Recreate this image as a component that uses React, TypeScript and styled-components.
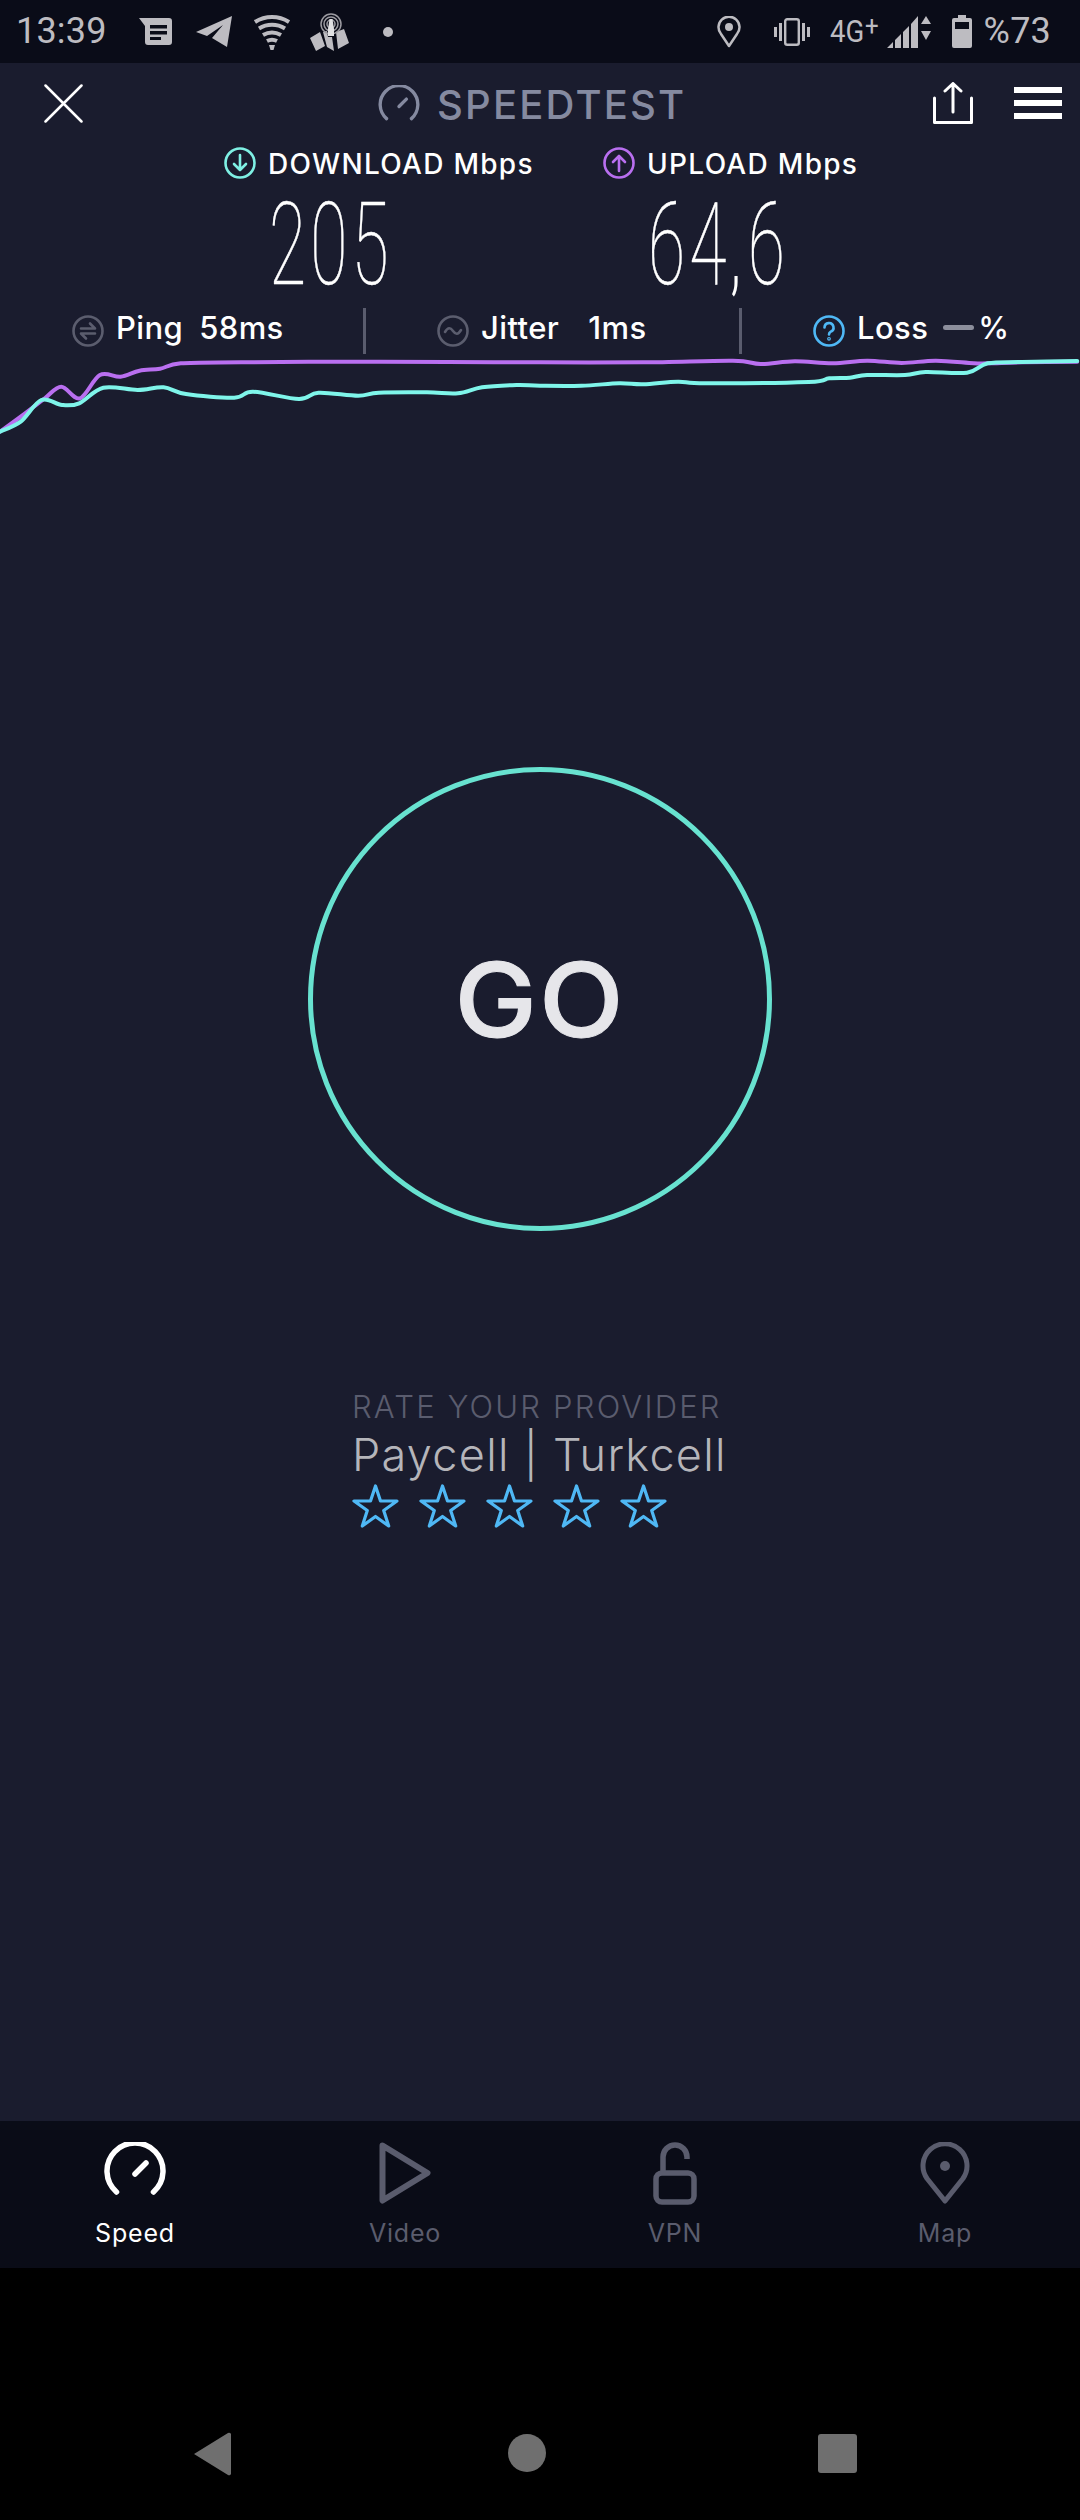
import React from "react";
import styled, { createGlobalStyle } from "styled-components";

const UI = `Inter, "Noto Sans", sans-serif`;

const Global = createGlobalStyle`
  html, body { margin: 0; padding: 0; background: #000; }
  #root { width: 1080px; height: 2520px; }
  * { box-sizing: border-box; }
`;

const Screen = styled.div`
  width: 1080px;
  height: 2520px;
  display: flex;
  flex-direction: column;
  background: #1a1c2e;
  font-family: ${UI};
  overflow: hidden;
`;

const StatusBar = styled.div`
  height: 63px;
  flex: none;
  background: #0a0c18;
  display: flex;
  align-items: center;
  justify-content: space-between;
  padding: 0 29px 0 16px;
  color: #bdbcc1;
  font-family: Roboto, sans-serif;
`;
const StatusGroup = styled.div`
  display: flex;
  align-items: center;
`;
const StatusText = styled.span`
  font-size: 36px;
  line-height: 63px;
  letter-spacing: 0.2px;
`;
const StatusSlot = styled.span<{ $left: number }>`
  display: flex;
  margin-left: ${(p) => p.$left}px;
`;
const Network = styled.span`
  display: inline-block;
  width: 50px;
  margin-left: 20px;
  font-size: 32px;
  line-height: 63px;
  white-space: nowrap;
  transform: scaleX(0.86);
  transform-origin: left center;
`;
const NetworkPlus = styled.span`
  font-size: 28px;
  position: relative;
  top: -7px;
  margin-left: 1px;
`;

const Header = styled.div`
  height: 80px;
  flex: none;
  display: flex;
  align-items: center;
  padding: 0 18px 0 44px;
`;
const Brand = styled.div`
  display: flex;
  align-items: center;
  gap: 17px;
  margin-left: 295px;
  color: #858aa0;
  font-size: 40px;
  font-weight: 500;
  letter-spacing: 2.2px;
`;
const BrandName = styled.span`
  margin-top: 2px;
`;
const HeaderActions = styled.div`
  margin-left: auto;
  display: flex;
  align-items: center;
  gap: 41px;
`;

const MetricsRow = styled.div`
  display: flex;
  flex: none;
  padding-left: 224px;
`;
const Metric = styled.div<{ $width: number }>`
  width: ${(p) => p.$width}px;
`;
const MetricLabel = styled.div`
  display: flex;
  align-items: center;
  gap: 12px;
  height: 40px;
  color: #fff;
  font-size: 28px;
  font-weight: 500;
  letter-spacing: 1.3px;
  white-space: nowrap;
`;
const MetricText = styled.span`
  margin-top: 2px;
`;
const MetricValue = styled.div`
  margin: 3px 0 0 45px;
  height: 122px;
  color: #fff;
  font-family: Roboto, sans-serif;
  font-weight: 100;
  font-size: 115px;
  line-height: 118px;
  letter-spacing: 7px;
  -webkit-text-stroke: 0.5px #fff;
  white-space: nowrap;
  transform: scaleX(0.59);
  transform-origin: left top;
`;
const MetricComma = styled.span`
  font-size: 90px;
  font-weight: 300;
  -webkit-text-stroke: 0;
  letter-spacing: 12px;
`;

const StatsRow = styled.div`
  display: grid;
  grid-template-columns: 363px 376px 1fr;
  height: 46px;
  flex: none;
`;
const StatCell = styled.div<{ $divider?: boolean }>`
  display: flex;
  align-items: center;
  padding-left: ${(p) => (p.$divider ? 71 : 72)}px;
  border-left: ${(p) => (p.$divider ? "3px solid #5a5c6e" : "none")};
  color: #fff;
  font-size: 31px;
  font-weight: 500;
  letter-spacing: 0.4px;
  white-space: nowrap;
`;
const StatName = styled.span`
  margin: 0 0 7px 12px;
`;
const StatValue = styled.span<{ $left: number }>`
  margin: 0 0 7px ${(p) => p.$left}px;
`;
const LossDash = styled.span`
  width: 31px;
  height: 5px;
  border-radius: 3px;
  background: #8c8e9c;
  margin: 0 4px 7px 15px;
`;
const LossUnit = styled.span`
  margin-bottom: 7px;
`;

const Chart = styled.svg`
  display: block;
  flex: none;
  width: 1080px;
  height: 90px;
`;

const GoButton = styled.button`
  align-self: center;
  flex: none;
  width: 464px;
  height: 464px;
  margin-top: 323px;
  border-radius: 50%;
  border: 5px solid #68e2d0;
  background: transparent;
  color: #e6e6ea;
  font-family: ${UI};
  padding: 0;
`;
const GoLabel = styled.span`
  display: inline-block;
  font-size: 103px;
  font-weight: 500;
  letter-spacing: 2px;
  transform: scaleX(1.07);
  -webkit-text-stroke: 1px #e6e6ea;
`;

const Rate = styled.div`
  flex: none;
  margin: 157px 0 0 352px;
`;
const RateTitle = styled.div`
  color: #5a5c6e;
  font-size: 31px;
  font-weight: 300;
  line-height: 38px;
  letter-spacing: 2.2px;
`;
const RateProvider = styled.div`
  color: #b5b5ba;
  font-size: 45px;
  font-weight: 300;
  line-height: 58px;
  letter-spacing: 1.3px;
`;
const Stars = styled.div`
  display: flex;
  gap: 20px;
`;

const Spacer = styled.div`
  flex: 1;
`;

const TabBar = styled.div`
  flex: none;
  height: 147px;
  background: #0a0c17;
  display: grid;
  grid-template-columns: repeat(4, 1fr);
`;
const Tab = styled.div<{ $active?: boolean }>`
  display: flex;
  flex-direction: column;
  align-items: center;
  color: ${(p) => (p.$active ? "#fff" : "#5a5c6d")};
  font-size: 25px;
  font-weight: 400;
  letter-spacing: 0.8px;
`;
const TabIcon = styled.div`
  height: 84px;
  padding-top: 21px;
  display: flex;
  justify-content: center;
`;
const TabLabel = styled.div`
  line-height: 40px;
  margin-top: 8px;
`;

const NavBar = styled.div`
  flex: none;
  height: 252px;
  background: #000;
  display: flex;
  align-items: flex-start;
  padding: 164px 0 0 193px;
`;
const NavBack = styled.svg`
  width: 38px;
  height: 44px;
`;
const NavHome = styled.span`
  width: 38px;
  height: 38px;
  margin: 2px 0 0 277px;
  border-radius: 50%;
  background: #6f6f6f;
`;
const NavRecent = styled.span`
  width: 39px;
  height: 39px;
  margin: 2px 0 0 272px;
  border-radius: 3px;
  background: #6f6f6f;
`;

const sx = 2.904;
const L = (pts: number[][]) => pts.map(([x, y]) => [x / sx, y / 3 + 130 - 354]);
const R = (pts: number[][]) => pts.map(([x, y]) => [540 + x / sx, y / 3 + 130 - 354]);

const smooth = (pts: number[][]) => {
  let d = `M${pts[0][0].toFixed(1)} ${pts[0][1].toFixed(1)}`;
  for (let i = 0; i < pts.length - 1; i++) {
    const p0 = pts[Math.max(i - 1, 0)];
    const p1 = pts[i];
    const p2 = pts[i + 1];
    const p3 = pts[Math.min(i + 2, pts.length - 1)];
    const c1x = p1[0] + (p2[0] - p0[0]) / 6;
    const c1y = p1[1] + (p2[1] - p0[1]) / 6;
    const c2x = p2[0] - (p3[0] - p1[0]) / 6;
    const c2y = p2[1] - (p3[1] - p1[1]) / 6;
    d += ` C${c1x.toFixed(1)} ${c1y.toFixed(1)} ${c2x.toFixed(1)} ${c2y.toFixed(1)} ${p2[0].toFixed(1)} ${p2[1].toFixed(1)}`;
  }
  return d;
};

const purple = smooth([
  ...L([[0, 905], [60, 860], [130, 805], [178, 770], [232, 805], [290, 735], [350, 740], [405, 722], [465, 716], [525, 700], [700, 697], [1000, 695], [1300, 696]]),
  ...R([[0, 697], [300, 697], [560, 692], [640, 702], [740, 694], [850, 700], [950, 692], [1050, 699], [1150, 692], [1260, 700], [1300, 700], [1400, 697], [1560, 695]]),
]);
const cyan = smooth([
  ...L([[0, 905], [60, 875], [120, 810], [180, 825], [230, 820], [300, 773], [400, 780], [475, 772], [540, 792], [680, 803], [735, 785], [868, 807], [925, 788], [1040, 797], [1100, 788], [1240, 787], [1330, 790], [1400, 772], [1500, 765]]),
  ...R([[0, 767], [120, 767], [230, 760], [300, 763], [400, 755], [480, 760], [780, 756], [840, 745], [900, 743], [950, 735], [1060, 735], [1120, 726], [1240, 728], [1300, 700], [1400, 696], [1560, 693]]),
]);

const Gauge = ({ w, h, color, sw }: { w: number; h: number; color: string; sw: number }) => (
  <svg width={w} height={h} viewBox="0 0 62 55" fill="none" stroke={color} strokeWidth={sw} strokeLinecap="round">
    <path d="M12.5 50A28 28 0 1 1 49.500 50" />
    <path d="M31 32L42 21" />
  </svg>
);

const Ring = ({ color, children }: { color: string; children: React.ReactNode }) => (
  <svg width="32" height="32" viewBox="0 0 32 32" fill="none" stroke={color} strokeWidth="2.6" strokeLinecap="round" strokeLinejoin="round">
    <circle cx="16" cy="16" r="14.5" />
    {children}
  </svg>
);

const Star = () => (
  <svg width="47" height="44" viewBox="0 0 47 44" fill="none" stroke="#4fb8f5" strokeWidth="3.2" strokeLinejoin="round">
    <path d="M23.500 2L28.500 17H45L31.700 26.500L36.700 42L23.500 32.500L10.300 42L15.300 26.500L2 17H18.500Z" />
  </svg>
);

export default function App() {
  return (
    <Screen>
      <Global />
      <StatusBar>
        <StatusGroup>
          <StatusText>13:39</StatusText>
          <StatusSlot $left={32}>
            <svg width="33" height="27" viewBox="0 0 33 27">
              <path fill="#bdbcc1" d="M0 0H30a3 3 0 0 1 3 3V24a3 3 0 0 1-3 3H9a3 3 0 0 1-3-3V8Z" />
              <path fill="#0a0c18" d="M11 7H28V10.500H11ZM11 13H28V16.500H11ZM11 19H22V22H11Z" />
            </svg>
          </StatusSlot>
          <StatusSlot $left={24}>
            <svg width="36" height="32" viewBox="0 0 36 32">
              <path fill="#bdbcc1" d="M0 16L36 0L31 31L16 22L27 9L11 20Z" />
            </svg>
          </StatusSlot>
          <StatusSlot $left={22}>
            <svg width="36" height="36" viewBox="0 0 36 36" fill="none" stroke="#bdbcc1" strokeWidth="4">
              <path d="M1 8A32 32 0 0 1 35 8" />
              <path d="M5 14.500A25 25 0 0 1 31 14.500" />
              <path d="M9 21A18 18 0 0 1 27 21" />
              <path d="M13 27A11 11 0 0 1 23 27" />
              <path fill="#bdbcc1" stroke="none" d="M15 31H21L19.500 36H16.500Z" />
            </svg>
          </StatusSlot>
          <StatusSlot $left={20}>
            <svg width="39" height="38" viewBox="0 0 39 38">
              <path fill="#bdbcc1" d="M0 25L10 19L15 33L6 38ZM13 19L17 18L18 24H22L24 38L17 34ZM26 19L34 16L39 30L28 36Z" />
              <g fill="none" stroke="#9c9ba1" strokeWidth="1.500">
                <circle cx="21" cy="11" r="10" />
                <circle cx="21" cy="11" r="7" />
                <circle cx="21" cy="11" r="4" />
              </g>
              <path fill="#e0e0e2" d="M19.500 6H22.500L24 16V23H18V16Z" />
            </svg>
          </StatusSlot>
          <StatusSlot $left={34}>
            <svg width="10" height="10" viewBox="0 0 10 10">
              <circle cx="5" cy="5" r="5" fill="#bdbcc1" />
            </svg>
          </StatusSlot>
        </StatusGroup>
        <StatusGroup>
          <svg width="24" height="32" viewBox="0 0 24 32" fill="none" stroke="#bdbcc1" strokeWidth="2.500">
            <path d="M12 30L4 18A10.500 10.500 0 1 1 20 18Z" strokeLinejoin="round" />
            <circle cx="12" cy="11" r="4" fill="#bdbcc1" stroke="none" />
          </svg>
          <StatusSlot $left={33}>
            <svg width="36" height="28" viewBox="0 0 36 28" fill="#bdbcc1">
              <path d="M0 9H3V19H0ZM5 5H8V23H5ZM28 5H31V23H28ZM33 9H36V19H33Z" />
              <rect x="11.200" y="1.200" width="13.600" height="25.600" rx="2" fill="none" stroke="#bdbcc1" strokeWidth="2.400" />
            </svg>
          </StatusSlot>
          <Network>
            4G<NetworkPlus>+</NetworkPlus>
          </Network>
          <StatusSlot $left={7}>
            <svg width="44" height="33" viewBox="0 0 44 33" fill="#bdbcc1">
              <path d="M0 33L6 27V33ZM8 33V25L14 19V33ZM16 33V17L22 11V33ZM24 33V9L31 1V33Z" />
              <path d="M39 1L44 9H34ZM39 25L34 16H44Z" />
            </svg>
          </StatusSlot>
          <StatusSlot $left={21}>
            <svg width="20" height="33" viewBox="0 0 20 33">
              <path fill="#bdbcc1" d="M6 0H14V3H18a2 2 0 0 1 2 2V31a2 2 0 0 1-2 2H2a2 2 0 0 1-2-2V5a2 2 0 0 1 2-2H6Z" />
              <path fill="#0a0c18" d="M3 7H17V14H3Z" />
            </svg>
          </StatusSlot>
          <StatusSlot $left={12}>
            <StatusText>%73</StatusText>
          </StatusSlot>
        </StatusGroup>
      </StatusBar>

      <Header>
        <svg width="39" height="39" viewBox="0 0 39 39" stroke="#fff" strokeWidth="2.500" strokeLinecap="round">
          <path d="M1.500 1.500L37.500 37.500M37.500 1.500L1.500 37.500" />
        </svg>
        <Brand>
          <Gauge w={42} h={37} color="#858aa0" sw={5} />
          <BrandName>SPEEDTEST</BrandName>
        </Brand>
        <HeaderActions>
          <svg width="40" height="42" viewBox="0 0 40 42" fill="none" stroke="#fff" strokeWidth="3" strokeLinecap="round" strokeLinejoin="round">
            <path d="M1.500 16V40.500H38.500V16" />
            <path d="M20 30V2M12 9L20 1.500L28 9" />
          </svg>
          <svg width="48" height="32" viewBox="0 0 48 32" fill="#fff">
            <path d="M0 0H48V6H0ZM0 13H48V19H0ZM0 26H48V32H0Z" />
          </svg>
        </HeaderActions>
      </Header>

      <MetricsRow>
        <Metric $width={379}>
          <MetricLabel>
            <Ring color="#7ff0e4">
              <path d="M16 8V23M10 17L16 23L22 17" />
            </Ring>
            <MetricText>DOWNLOAD Mbps</MetricText>
          </MetricLabel>
          <MetricValue>205</MetricValue>
        </Metric>
        <Metric $width={300}>
          <MetricLabel>
            <Ring color="#b96ff0">
              <path d="M16 24V9M10 15L16 9L22 15" />
            </Ring>
            <MetricText>UPLOAD Mbps</MetricText>
          </MetricLabel>
          <MetricValue>
            64<MetricComma>,</MetricComma>6
          </MetricValue>
        </Metric>
      </MetricsRow>

      <StatsRow>
        <StatCell>
          <Ring color="#5b5d6e">
            <path d="M9 13.500H23L18 8.500M23 18.500H9L14 23.500" />
          </Ring>
          <StatName>Ping</StatName>
          <StatValue $left={16}>58ms</StatValue>
        </StatCell>
        <StatCell $divider>
          <Ring color="#5b5d6e">
            <path d="M8 17C11 12 13.500 12.500 16 16C18.500 19.500 21 20 24 15" />
          </Ring>
          <StatName>Jitter</StatName>
          <StatValue $left={29}>1ms</StatValue>
        </StatCell>
        <StatCell $divider>
          <Ring color="#4fb8f5">
            <path d="M11.500 12.500A4.500 4.500 0 1 1 17.500 16.800C16.300 17.500 16 18 16 19.500" />
            <circle cx="16" cy="23.800" r="0.600" />
          </Ring>
          <StatName>Loss</StatName>
          <LossDash />
          <LossUnit>%</LossUnit>
        </StatCell>
      </StatsRow>

      <Chart viewBox="0 0 1080 90" fill="none" strokeWidth="4" strokeLinecap="round" strokeLinejoin="round">
        <path d={purple} stroke="#b96ff0" />
        <path d={cyan} stroke="#7ff5ea" />
      </Chart>

      <GoButton>
        <GoLabel>GO</GoLabel>
      </GoButton>

      <Rate>
        <RateTitle>RATE YOUR PROVIDER</RateTitle>
        <RateProvider>Paycell | Turkcell</RateProvider>
        <Stars>
          <Star />
          <Star />
          <Star />
          <Star />
          <Star />
        </Stars>
      </Rate>

      <Spacer />

      <TabBar>
        <Tab $active>
          <TabIcon>
            <Gauge w={62} h={55} color="#fff" sw={5.500} />
          </TabIcon>
          <TabLabel>Speed</TabLabel>
        </Tab>
        <Tab>
          <TabIcon>
            <svg width="52" height="62" viewBox="0 0 52 62" fill="none" stroke="#5a5c6d" strokeWidth="6" strokeLinejoin="round">
              <path d="M3.500 3.500L48.500 31L3.500 58.500Z" />
            </svg>
          </TabIcon>
          <TabLabel>Video</TabLabel>
        </Tab>
        <Tab>
          <TabIcon>
            <svg width="44" height="63" viewBox="0 0 44 63" fill="none" stroke="#5a5c6d" strokeWidth="5.500">
              <rect x="3" y="31" width="38" height="29" rx="6" />
              <path d="M10 30V15A12 12 0 0 1 34 15V17" />
            </svg>
          </TabIcon>
          <TabLabel>VPN</TabLabel>
        </Tab>
        <Tab>
          <TabIcon>
            <svg width="50" height="63" viewBox="0 0 50 63" fill="none" stroke="#5a5c6d" strokeWidth="5">
              <path d="M25 59L7 36.500A22 22 0 1 1 43 36.500Z" strokeLinejoin="round" />
              <circle cx="25" cy="24" r="5" fill="#5a5c6d" stroke="none" />
            </svg>
          </TabIcon>
          <TabLabel>Map</TabLabel>
        </Tab>
      </TabBar>

      <NavBar>
        <NavBack viewBox="0 0 38 44">
          <path fill="#6f6f6f" d="M1 22L35 1a2 2 0 0 1 3 2V41a2 2 0 0 1-3 2Z" />
        </NavBack>
        <NavHome />
        <NavRecent />
      </NavBar>
    </Screen>
  );
}
